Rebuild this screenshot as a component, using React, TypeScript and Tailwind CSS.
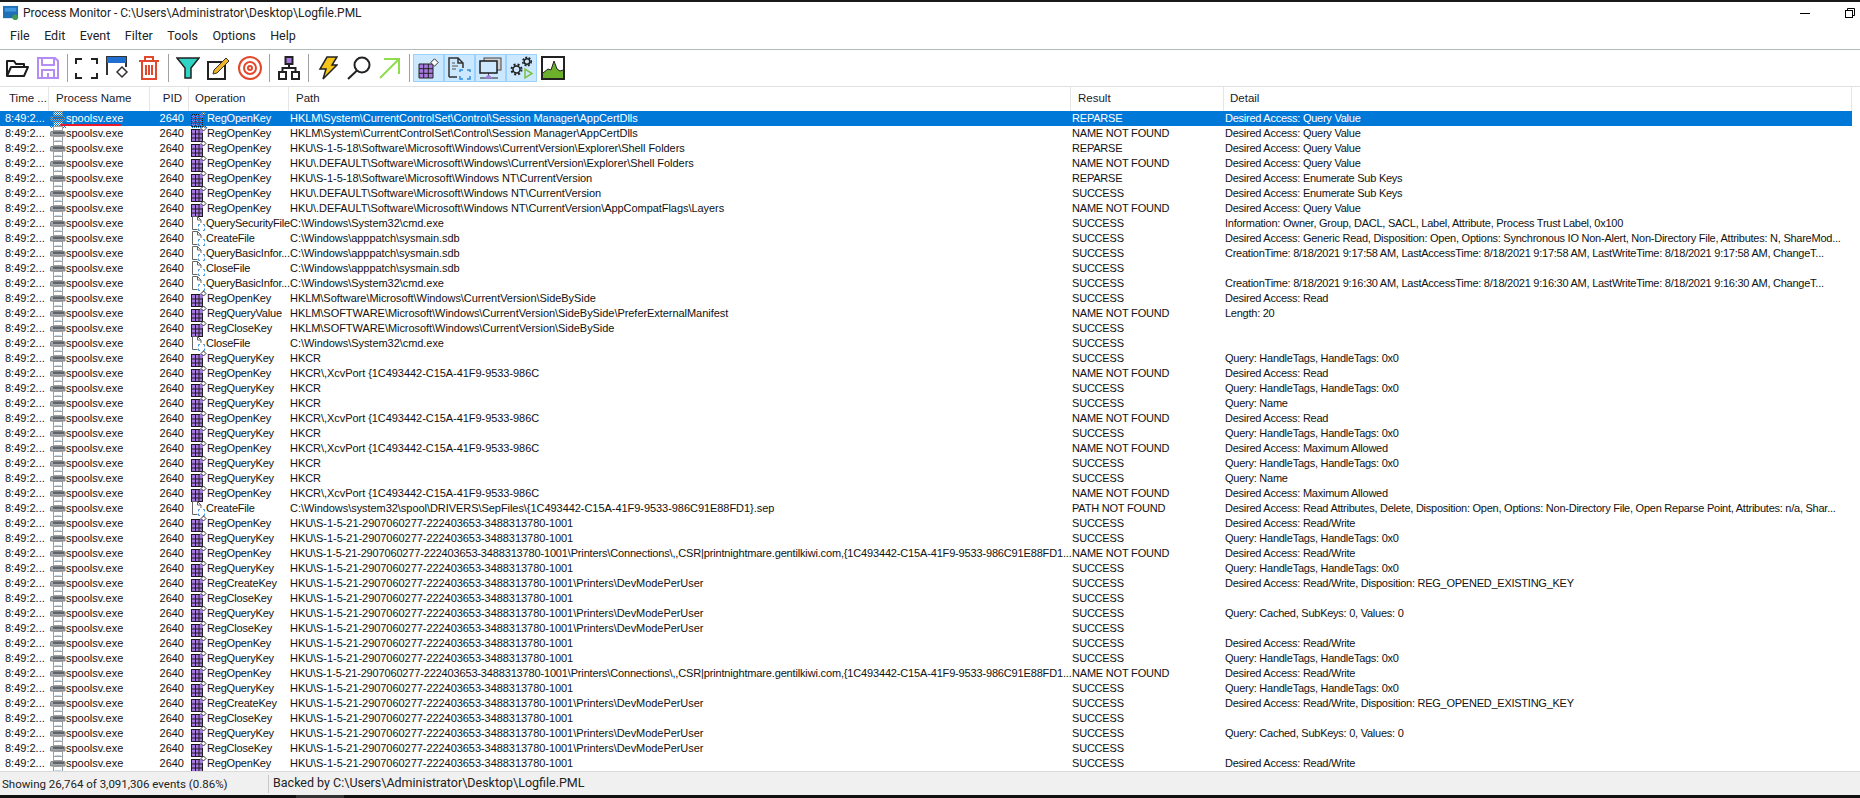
import React from "react";

const HKU = "HKU\\S-1-5-21-2907060277-222403653-3488313780-1001";
const DEVMODE = HKU + "\\Printers\\DevModePerUser";
const CONN = HKU + "\\Printers\\Connections\\,,CSR|printnightmare.gentilkiwi.com,{1C493442-C15A-41F9-9533-986C91E88FD1...";
const XCV = "HKCR\\,XcvPort {1C493442-C15A-41F9-9533-986C";
const Q = "Desired Access: Query Value";
const E = "Desired Access: Enumerate Sub Keys";
const TAGS = "Query: HandleTags, HandleTags: 0x0";
const RW = "Desired Access: Read/Write";
const MAX = "Desired Access: Maximum Allowed";
const READ = "Desired Access: Read";
const CREATE = "Desired Access: Read/Write, Disposition: REG_OPENED_EXISTING_KEY";
const CACHED = "Query: Cached, SubKeys: 0, Values: 0";
const S = "SUCCESS";
const N = "NAME NOT FOUND";
const R = "REPARSE";
const CMD = "C:\\Windows\\System32\\cmd.exe";
const SDB = "C:\\Windows\\apppatch\\sysmain.sdb";
const SIDE = "HKLM\\SOFTWARE\\Microsoft\\Windows\\CurrentVersion\\SideBySide";

const rows: [string, string, string, string][] = [
  ["RegOpenKey", "HKLM\\System\\CurrentControlSet\\Control\\Session Manager\\AppCertDlls", R, Q],
  ["RegOpenKey", "HKLM\\System\\CurrentControlSet\\Control\\Session Manager\\AppCertDlls", N, Q],
  ["RegOpenKey", "HKU\\S-1-5-18\\Software\\Microsoft\\Windows\\CurrentVersion\\Explorer\\Shell Folders", R, Q],
  ["RegOpenKey", "HKU\\.DEFAULT\\Software\\Microsoft\\Windows\\CurrentVersion\\Explorer\\Shell Folders", N, Q],
  ["RegOpenKey", "HKU\\S-1-5-18\\Software\\Microsoft\\Windows NT\\CurrentVersion", R, E],
  ["RegOpenKey", "HKU\\.DEFAULT\\Software\\Microsoft\\Windows NT\\CurrentVersion", S, E],
  ["RegOpenKey", "HKU\\.DEFAULT\\Software\\Microsoft\\Windows NT\\CurrentVersion\\AppCompatFlags\\Layers", N, Q],
  ["QuerySecurityFile", CMD, S, "Information: Owner, Group, DACL, SACL, Label, Attribute, Process Trust Label, 0x100"],
  ["CreateFile", SDB, S, "Desired Access: Generic Read, Disposition: Open, Options: Synchronous IO Non-Alert, Non-Directory File, Attributes: N, ShareMod..."],
  ["QueryBasicInfor...", SDB, S, "CreationTime: 8/18/2021 9:17:58 AM, LastAccessTime: 8/18/2021 9:17:58 AM, LastWriteTime: 8/18/2021 9:17:58 AM, ChangeT..."],
  ["CloseFile", SDB, S, ""],
  ["QueryBasicInfor...", CMD, S, "CreationTime: 8/18/2021 9:16:30 AM, LastAccessTime: 8/18/2021 9:16:30 AM, LastWriteTime: 8/18/2021 9:16:30 AM, ChangeT..."],
  ["RegOpenKey", "HKLM\\Software\\Microsoft\\Windows\\CurrentVersion\\SideBySide", S, READ],
  ["RegQueryValue", SIDE + "\\PreferExternalManifest", N, "Length: 20"],
  ["RegCloseKey", SIDE, S, ""],
  ["CloseFile", CMD, S, ""],
  ["RegQueryKey", "HKCR", S, TAGS],
  ["RegOpenKey", XCV, N, READ],
  ["RegQueryKey", "HKCR", S, TAGS],
  ["RegQueryKey", "HKCR", S, "Query: Name"],
  ["RegOpenKey", XCV, N, READ],
  ["RegQueryKey", "HKCR", S, TAGS],
  ["RegOpenKey", XCV, N, MAX],
  ["RegQueryKey", "HKCR", S, TAGS],
  ["RegQueryKey", "HKCR", S, "Query: Name"],
  ["RegOpenKey", XCV, N, MAX],
  ["CreateFile", "C:\\Windows\\system32\\spool\\DRIVERS\\SepFiles\\{1C493442-C15A-41F9-9533-986C91E88FD1}.sep", "PATH NOT FOUND", "Desired Access: Read Attributes, Delete, Disposition: Open, Options: Non-Directory File, Open Reparse Point, Attributes: n/a, Shar..."],
  ["RegOpenKey", HKU, S, RW],
  ["RegQueryKey", HKU, S, TAGS],
  ["RegOpenKey", CONN, N, RW],
  ["RegQueryKey", HKU, S, TAGS],
  ["RegCreateKey", DEVMODE, S, CREATE],
  ["RegCloseKey", HKU, S, ""],
  ["RegQueryKey", DEVMODE, S, CACHED],
  ["RegCloseKey", DEVMODE, S, ""],
  ["RegOpenKey", HKU, S, RW],
  ["RegQueryKey", HKU, S, TAGS],
  ["RegOpenKey", CONN, N, RW],
  ["RegQueryKey", HKU, S, TAGS],
  ["RegCreateKey", DEVMODE, S, CREATE],
  ["RegCloseKey", HKU, S, ""],
  ["RegQueryKey", DEVMODE, S, CACHED],
  ["RegCloseKey", DEVMODE, S, ""],
  ["RegOpenKey", HKU, S, RW],
];

function Dither() {
  return (
    <>
      <defs>
        <pattern id="dither" width="2" height="2" patternUnits="userSpaceOnUse">
          <rect width="1" height="1" fill="#0078d7" />
          <rect x="1" y="1" width="1" height="1" fill="#0078d7" />
        </pattern>
      </defs>
      <rect width="16" height="18" fill="url(#dither)" />
    </>
  );
}

function PrinterIcon({ selected }: { selected?: boolean }) {
  return (
    <svg width="16" height="18" viewBox="0 0 16 18" className="shrink-0 overflow-visible">
      <rect x="3.5" y="1.5" width="9" height="4" fill="#fff" stroke="#a0a0a0" />
      <path d="M1 6.5h13.5l.5 1v3.5H0.5V7.5z" fill="#a4a8ac" stroke="#80858a" />
      <rect x="3" y="7" width="11" height="2" fill="#5f646a" />
      <rect x="3.5" y="11.5" width="9" height="6" fill="#fff" stroke="#9a9a9a" />
      <path d="M5 16.5h6" stroke="#6fb3e0" strokeWidth="2" />
      {selected && <Dither />}
    </svg>
  );
}

function RegIcon({ selected }: { selected?: boolean }) {
  return (
    <svg width="16" height="18" viewBox="0 0 16 18" className="shrink-0 overflow-visible">
      <rect x="0" y="4" width="12" height="13" fill="#a779e0" />
      <path d="M0.5 4v13M4.5 4v13M8 4v13M11.5 8v9M0 4.5h9M0 9h12M0 13h12M0 16.5h12" fill="none" stroke="#1c1c1c" />
      <path d="M12.5 1l2.5 2.5-2.5 2.5L10 3.5z" fill="#fff" stroke="#333" />
      {selected && <Dither />}
    </svg>
  );
}

function FileIcon() {
  return (
    <svg width="16" height="18" viewBox="0 0 16 18" className="shrink-0 overflow-visible">
      <path d="M1.5 14.5V1.5h5l3.5 3.5v3M1.5 14.5h5M6.5 1.5v3.5h3.5" fill="#fff" stroke="#666" />
      <path d="M9 9.5H7.5v2M12 9.5h1.5v2M7.5 13.5v2H9M13.5 13.5v2H12" fill="none" stroke="#3f97dd" />
    </svg>
  );
}

function Tool({ children, on }: { children: React.ReactNode; on?: boolean }) {
  return (
    <div
      className={
        "flex h-7 w-[31px] shrink-0 items-center justify-center " +
        (on ? "border border-[#99d1ff] bg-[#cce8ff]" : "")
      }
    >
      {children}
    </div>
  );
}

function Sep() {
  return (
    <div className="flex h-7 w-2 shrink-0 justify-center">
      <div className="h-full w-px bg-[#a0a0a0]" />
    </div>
  );
}

function Toolbar() {
  return (
    <div className="flex h-9 shrink-0 items-center pl-px">
      <Tool>
        <svg width="24" height="20" viewBox="0 0 24 20" fill="none" stroke="#1d1d1d" strokeWidth="2">
          <path d="M2 18V3h7l2 3h8v3M2 18l4-9h17l-4 9z" strokeLinejoin="round" />
        </svg>
      </Tool>
      <Tool>
        <svg width="24" height="24" viewBox="0 0 24 24" fill="none" stroke="#b48cf5" strokeWidth="2">
          <path d="M2 2h17l3 3v17H2z" />
          <path d="M6 2v7h12V2M6 22v-8h12v8M12 17v5" />
        </svg>
      </Tool>
      <Sep />
      <Tool>
        <svg width="23" height="21" viewBox="0 0 23 21" fill="none" stroke="#222" strokeWidth="2">
          <path d="M1 6V1h6M16 1h6v5M22 15v5h-6M7 20H1v-5" />
        </svg>
      </Tool>
      <Tool>
        <svg width="23" height="25" viewBox="0 0 23 25" fill="none">
          <path d="M1 19V1h19v10" stroke="#333" strokeWidth="2" />
          <rect x="1" y="1" width="19" height="6" fill="#1f6fd0" />
          <path d="M16 11l5 5-5 5-5-5z" stroke="#333" strokeWidth="1.5" fill="#fff" />
        </svg>
      </Tool>
      <Tool>
        <svg width="20" height="24" viewBox="0 0 20 24" fill="none" stroke="#e2492c" strokeWidth="2">
          <path d="M0 5h20M6 5V1h8v4M3 5v18h14V5M7 9v10M10 9v10M13 9v10" />
        </svg>
      </Tool>
      <Sep />
      <Tool>
        <svg width="24" height="22" viewBox="0 0 24 22" stroke="#222" strokeWidth="1.5">
          <path d="M1 1h22l-8 10v10H9V11z" fill="#2fd4c4" />
        </svg>
      </Tool>
      <Tool>
        <svg width="23" height="23" viewBox="0 0 23 23" fill="none">
          <path d="M18 6v16H1V5h14" stroke="#222" strokeWidth="2" />
          <path d="M6 17l1-4L19 1l3 3L10 16z" fill="#f0b429" stroke="#333" />
        </svg>
      </Tool>
      <Tool>
        <svg width="24" height="24" viewBox="0 0 24 24" fill="none" stroke="#e2492c" strokeWidth="2">
          <circle cx="12" cy="12" r="11" />
          <circle cx="12" cy="12" r="6" />
          <circle cx="12" cy="12" r="2" />
        </svg>
      </Tool>
      <Sep />
      <Tool>
        <svg width="22" height="24" viewBox="0 0 22 24" fill="none" stroke="#222" strokeWidth="2">
          <rect x="7.5" y="1" width="7" height="7" fill="#a779e0" />
          <rect x="1" y="16" width="7" height="7" />
          <rect x="14" y="16" width="7" height="7" />
          <path d="M11 8v4M4.5 16v-4h13v4" />
        </svg>
      </Tool>
      <Sep />
      <Tool>
        <svg width="20" height="24" viewBox="0 0 20 24" stroke="#222" strokeWidth="1.5">
          <path d="M9 1h10l-5 8h5L5 23l3-10H2z" fill="#f5c518" />
        </svg>
      </Tool>
      <Tool>
        <svg width="24" height="24" viewBox="0 0 24 24" fill="none" stroke="#222" strokeWidth="2">
          <circle cx="15" cy="9" r="7.5" />
          <path d="M10 14.5L1 23" />
        </svg>
      </Tool>
      <Tool>
        <svg width="22" height="22" viewBox="0 0 22 22" fill="none" stroke="#8fdc4f" strokeWidth="2">
          <path d="M1 21L20 2M5 2h15v15" />
        </svg>
      </Tool>
      <Sep />
      <Tool on>
        <svg width="21" height="21" viewBox="0 0 21 21" fill="none">
          <rect x="1" y="6" width="14" height="14" fill="#a779e0" />
          <path d="M1 6v14h14V6zM5.7 6v14M10.3 6v14M1 10.7h14M1 15.3h14" stroke="#222" />
          <path d="M16.5 0.8l3.7 3.7-3.7 3.7-3.7-3.7z" fill="#fff" stroke="#333" />
        </svg>
      </Tool>
      <Tool on>
        <svg width="23" height="23" viewBox="0 0 23 23" fill="none">
          <path d="M1 20V1h9l5 5v5M1 20h8M10 1v5h5" stroke="#333" strokeWidth="1.5" />
          <path d="M4 6h3M4 9h6M4 12h4" stroke="#555" />
          <path d="M12 15v-2h3M19 13h3v2M12 19v3h3M19 22h3v-3" stroke="#2f8fe0" strokeWidth="1.5" />
        </svg>
      </Tool>
      <Tool on>
        <svg width="23" height="23" viewBox="0 0 23 23" fill="none">
          <rect x="5" y="1" width="17" height="12" fill="#d0d0d0" stroke="#444" />
          <rect x="1" y="4" width="17" height="12" fill="#cce8ff" stroke="#1d1d1d" strokeWidth="1.5" />
          <path d="M9.5 16v3M1 21h18" stroke="#222" />
          <path d="M6 21l3.5-3 3.5 3z" fill="#a779e0" stroke="#a779e0" />
        </svg>
      </Tool>
      <Tool on>
        <svg width="24" height="24" viewBox="0 0 24 24" fill="none" stroke="#222">
          <circle cx="6.5" cy="13.5" r="3.5" strokeWidth="1.5" />
          <circle cx="6.5" cy="13.5" r="5" strokeDasharray="2 2" strokeWidth="2" />
          <circle cx="17" cy="5.5" r="2.8" strokeWidth="1.5" />
          <circle cx="17" cy="5.5" r="4.2" strokeDasharray="2 1.5" strokeWidth="1.6" />
          <path d="M15 13v9l7-4.5z" stroke="#7bc043" strokeWidth="1.5" />
        </svg>
      </Tool>
      <Tool>
        <svg width="24" height="24" viewBox="0 0 24 24">
          <rect x="1" y="1" width="22" height="22" fill="#fff" stroke="#222" strokeWidth="2" />
          <path d="M2 17l5-4 3 1 3-9 3 8 3 2 3-1v8H2z" fill="#6cb02c" />
          <path d="M2 17l5-4 3 1 3-9 3 8 3 2 3-1" fill="none" stroke="#222" />
        </svg>
      </Tool>
    </div>
  );
}

function HeaderCell({ className, children }: { className: string; children: React.ReactNode }) {
  return (
    <div className={"flex h-full shrink-0 items-center border-r border-[#e5e5e5] " + className}>
      {children}
    </div>
  );
}

function Row({ row, selected }: { row: [string, string, string, string]; selected?: boolean }) {
  const isFile = !row[0].startsWith("Reg");
  const longPath = row[1].length > 100;
  return (
    <div
      className={
        "relative flex h-[15px] w-[1852px] shrink-0 items-center whitespace-nowrap " +
        (selected ? "bg-[#0078d7] text-white" : "text-[#111]")
      }
    >
      <div className="w-[49px] shrink-0 pl-[5px]">8:49:2...</div>
      <div className="flex w-[101px] shrink-0 items-center">
        <div className="ml-px w-[16px]">
          <PrinterIcon selected={selected} />
        </div>
        <span>spoolsv.exe</span>
      </div>
      <div className="w-[34px] shrink-0 text-right">2640</div>
      <div className="flex w-[106px] shrink-0 items-center pl-[7px]">
        <div className={isFile ? "w-[15px] shrink-0" : "w-[16px] shrink-0"}>
          {isFile ? <FileIcon /> : <RegIcon selected={selected} />}
        </div>
        <span className="tracking-[-0.2px]">{row[0]}</span>
      </div>
      <div className={"w-[782px] shrink-0 " + (longPath ? "tracking-[-0.16px]" : "tracking-[-0.05px]")}>{row[1]}</div>
      <div className="w-[153px] shrink-0 tracking-[-0.2px]">{row[2]}</div>
      <div className="tracking-[-0.25px]">{row[3]}</div>
      {selected && <div className="absolute top-[13px] left-[60px] h-[2px] w-[61px] rounded-full bg-[#e8192c]" />}
    </div>
  );
}

export default function App() {
  return (
    <div className="flex h-[798px] w-[1860px] flex-col overflow-hidden bg-white font-['Liberation_Sans',sans-serif] text-black">
      <div className="h-[2px] shrink-0 bg-[#1a1a1a]" />
      <div className="flex h-[22px] shrink-0 items-center justify-between pr-[5px] pl-[3px] font-['Roboto',sans-serif] text-[12px] text-[#222]">
        <div className="flex items-center gap-[4px]">
          <svg width="16" height="16" viewBox="0 0 17 17">
            <rect x="0" y="1" width="16" height="13" fill="#1f6fb5" />
            <rect x="2" y="3" width="12" height="4" fill="#3f97dd" />
            <circle cx="13" cy="13" r="3" fill="#3f9d4a" />
          </svg>
          <span>Process Monitor - C:\Users\Administrator\Desktop\Logfile.PML</span>
        </div>
        <div className="flex items-center gap-[35px]">
          <div className="h-px w-[10px] bg-black" />
          <svg width="10" height="10" viewBox="0 0 10 10" fill="none" stroke="#000">
            <path d="M2.5 2.5V.5h7v7h-2" />
            <rect x="0.5" y="2.5" width="7" height="7" />
          </svg>
        </div>
      </div>
      <div className="flex h-[26px] shrink-0 items-center gap-[14.5px] border-b border-[#b4bab8] pl-[10px] font-['Roboto',sans-serif] text-[12.5px] text-[#222]">
        <span>File</span>
        <span>Edit</span>
        <span>Event</span>
        <span>Filter</span>
        <span>Tools</span>
        <span>Options</span>
        <span>Help</span>
      </div>
      <Toolbar />
      <div className="flex h-[25px] shrink-0 items-center border-t border-[#e0e0e0] text-[11.5px] text-[#1a1a2a]">
        <HeaderCell className="w-[49px] pl-[9px]">Time ...</HeaderCell>
        <HeaderCell className="w-[101px] pl-[7px]">Process Name</HeaderCell>
        <HeaderCell className="w-[39px] justify-end pr-[6px]">PID</HeaderCell>
        <HeaderCell className="w-[100px] pl-[6px]">Operation</HeaderCell>
        <HeaderCell className="w-[782px] pl-[7px]">Path</HeaderCell>
        <HeaderCell className="w-[153px] pl-[7px]">Result</HeaderCell>
        <HeaderCell className="w-[628px] pl-[6px]">Detail</HeaderCell>
      </div>
      <div className="flex min-h-0 flex-1 flex-col overflow-hidden text-[11px]">
        {rows.map((r, i) => (
          <Row key={i} row={r} selected={i === 0} />
        ))}
      </div>
      <div className="flex h-[24px] shrink-0 items-center border-t border-[#d9d9d9] bg-[#f0f0f0] font-['Roboto',sans-serif] text-[12.5px] text-[#222]">
        <div className="w-[269px] border-r border-[#c8c8c8] pl-[2px] text-[11.5px] leading-[18px]">Showing 26,764 of 3,091,306 events (0.86%)</div>
        <div className="pl-[4px]">Backed by C:\Users\Administrator\Desktop\Logfile.PML</div>
      </div>
      <div className="flex h-[3px] shrink-0 bg-[#111]">
        <div className="ml-[296px] w-[48px] bg-[#333]" />
      </div>
    </div>
  );
}
